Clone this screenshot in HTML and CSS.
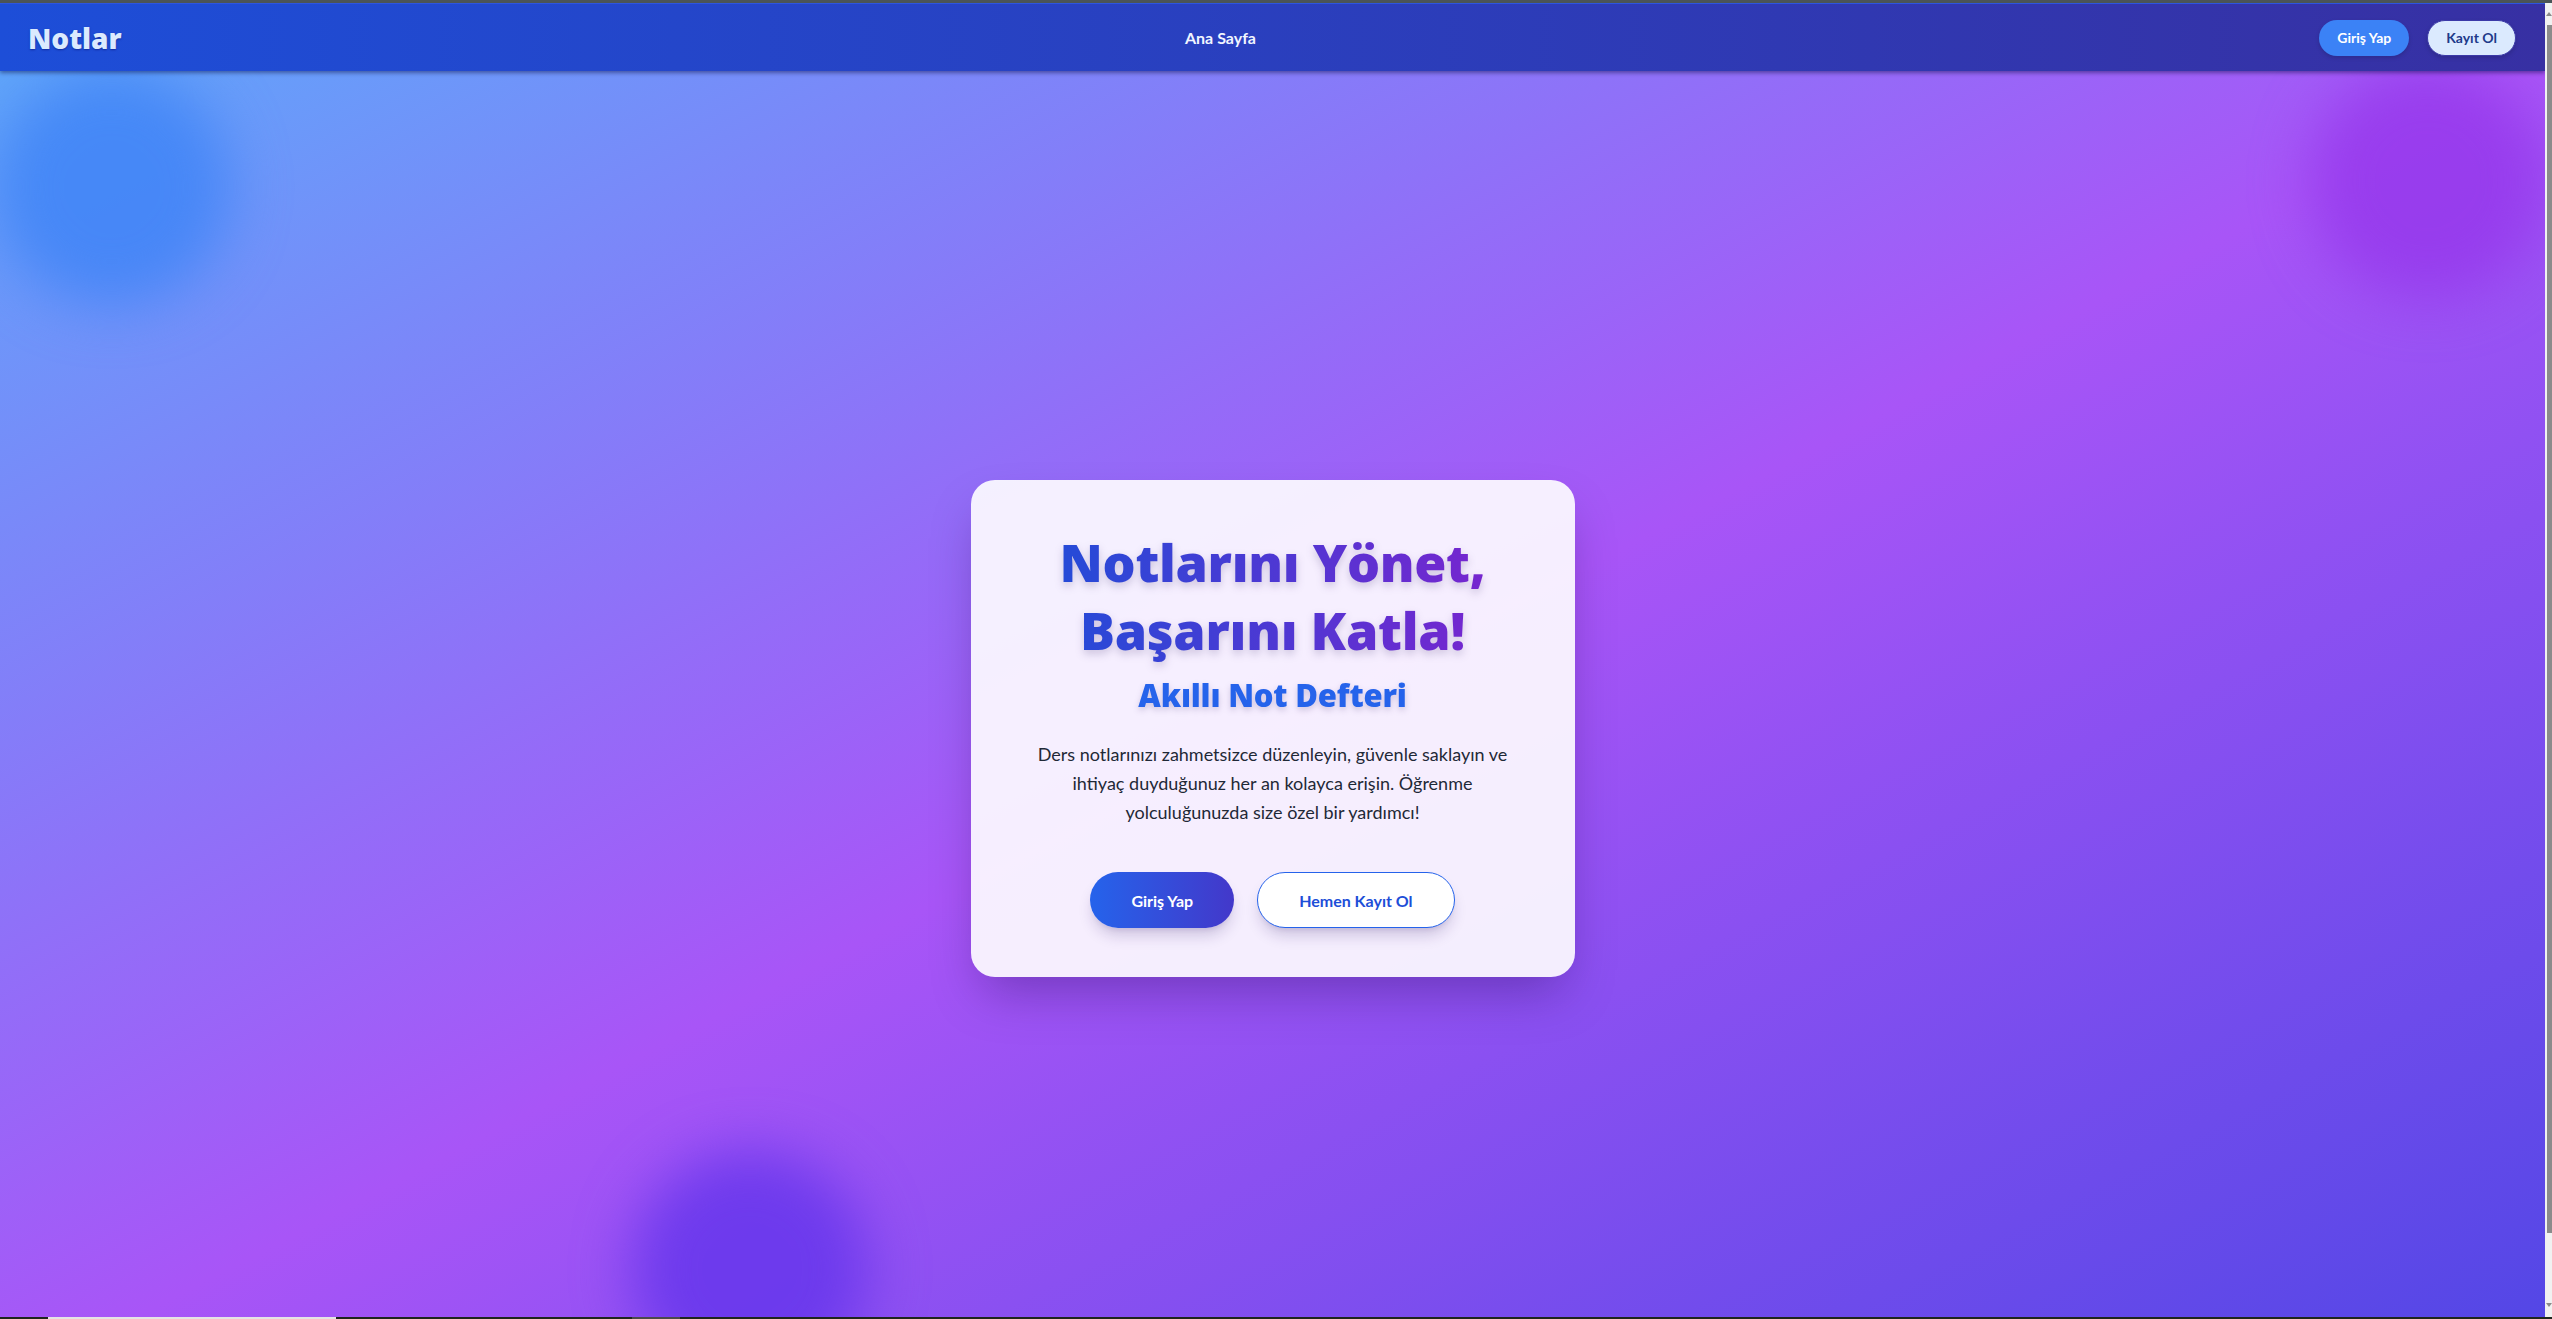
FILE: index.html
```html
<!DOCTYPE html>
<html lang="tr">
<head>
<meta charset="utf-8">
<title>Notlar</title>
<link rel="stylesheet" href="styles.css">
</head>
<body>
  <div class="frame-top"></div>
  <div class="viewport">
    <div class="page">
      <header class="nav">
        <a class="logo" href="#">Notlar</a>
        <nav class="nav-links"><a href="#">Ana Sayfa</a></nav>
        <div class="nav-actions">
          <a class="nav-btn nav-btn-login" href="#">Giriş Yap</a>
          <a class="nav-btn nav-btn-register" href="#">Kayıt Ol</a>
        </div>
      </header>
      <main class="hero">
        <span class="blob blob-blue"></span>
        <span class="blob blob-purple"></span>
        <span class="blob blob-violet"></span>
        <section class="card">
          <h1 class="card-title">Notlarını Yönet,<br>Başarını Katla!</h1>
          <h2 class="card-subtitle">Akıllı Not Defteri</h2>
          <p class="card-text">Ders notlarınızı zahmetsizce düzenleyin, güvenle saklayın ve ihtiyaç duyduğunuz her an kolayca erişin. Öğrenme yolculuğunuzda size özel bir yardımcı!</p>
          <div class="card-actions">
            <a class="btn btn-primary" href="#">Giriş Yap</a>
            <a class="btn btn-outline" href="#">Hemen Kayıt Ol</a>
          </div>
        </section>
      </main>
    </div>
    <div class="scrollbar">
      <span class="sb-arrow sb-up"></span>
      <span class="sb-thumb"></span>
      <span class="sb-arrow sb-down"></span>
    </div>
  </div>
  <div class="frame-bottom">
    <span class="fb-seg fb-light"></span>
    <span class="fb-seg fb-gray"></span>
  </div>
</body>
</html>
```

FILE: styles.css
```css
* { box-sizing: border-box; }
html, body { margin: 0; padding: 0; }
body {
  width: 2552px;
  height: 1319px;
  overflow: hidden;
  display: flex;
  flex-direction: column;
  font-family: "Lato", "Open Sans", sans-serif;
  background: #1f2620;
}
a { text-decoration: none; }

.frame-top { height: 3px; flex: none; background: #4b5457; }
.frame-bottom {
  height: 2px; flex: none; background: #1d261d;
  display: flex; padding-left: 48px;
}
.fb-seg { display: block; height: 2px; }
.fb-light { width: 288px; background: #e4e4e4; }
.fb-gray { width: 48px; margin-left: 296px; background: #4a4a4a; }

.viewport { flex: 1; display: flex; min-height: 0; }
.page { flex: 1; display: flex; flex-direction: column; overflow: hidden; background: #4f46e5; }

.scrollbar {
  width: 7px; flex: none; background: #f1f1f1;
  display: flex; flex-direction: column; align-items: flex-end;
  padding: 9px 0 10px;
}
.sb-arrow { width: 0; height: 0; border-left: 3px solid transparent; border-right: 3px solid transparent; }
.sb-up { border-bottom: 4px solid #8a8a8a; }
.sb-down { border-top: 4px solid #8a8a8a; margin-top: auto; }
.sb-thumb { width: 5px; height: 1208px; margin-top: 9px; background: #8b8b8b; }

/* header */
.nav {
  flex: none;
  height: 68px;
  display: flex;
  align-items: center;
  justify-content: space-between;
  padding: 0 29px 0 28px;
  background: linear-gradient(to right, #1d4ed8, #3730a3);
  border-top: 1px solid #2d55e0;
  box-shadow: 0 2px 4px rgba(10, 10, 60, 0.45);
  position: relative;
  z-index: 2;
}
.logo {
  font-family: "Open Sans", "Lato", sans-serif;
  font-size: 28px;
  font-weight: 800;
  color: #dbeafe;
  text-shadow: 0 1px 2px rgba(10, 20, 120, 0.6);
}
.nav-links a {
  color: #f1f5ff;
  font-size: 16px;
  font-weight: 700;
}
.nav-actions { display: flex; gap: 18px; }
.nav-btn {
  height: 36px;
  display: flex;
  align-items: center;
  padding: 0 18px;
  border-radius: 999px;
  font-size: 14px;
  font-weight: 700;
  box-shadow: 0 2px 4px rgba(0, 0, 0, 0.15);
}
.nav-btn-login { background: #3b82f6; color: #ffffff; }
.nav-btn-register { background: #dbeafe; color: #1e3a8a; border: 1px solid #3b3aa8; }

/* hero */
.hero {
  flex: none;
  height: 1315px;
  position: relative;
  display: flex;
  align-items: center;
  justify-content: center;
  background: linear-gradient(to bottom right, #60a5fa 0%, #a855f7 50%, #4f46e5 100%);
  overflow: hidden;
}
.blob {
  position: absolute;
  width: 236px;
  height: 236px;
  border-radius: 50%;
  filter: blur(28px);
}
.blob-blue { left: -6px; top: -2px; background: rgba(59, 130, 246, 0.75); }
.blob-purple { left: 2310px; top: -8px; background: rgba(147, 51, 234, 0.7); }
.blob-violet { left: 632px; top: 1080px; background: rgba(99, 52, 235, 0.8); }

.card {
  position: relative;
  width: 604px;
  padding: 48px 48px 49px;
  border-radius: 24px;
  background: rgba(255, 255, 255, 0.9);
  box-shadow: 0 25px 50px -12px rgba(30, 10, 80, 0.35);
  text-align: center;
}
.card-title {
  margin: 0 0 13px;
  font-family: "Open Sans", "Lato", sans-serif;
  font-size: 52px;
  line-height: 68px;
  font-weight: 800;
  letter-spacing: -0.3px;
  background: linear-gradient(to right, #1d4ed8, #7e22ce);
  -webkit-background-clip: text;
  background-clip: text;
  color: transparent;
  filter: drop-shadow(0 4px 4px rgba(40, 20, 90, 0.2));
}
.card-subtitle {
  margin: 0 0 27px;
  font-family: "Open Sans", "Lato", sans-serif;
  font-size: 31px;
  line-height: 36px;
  font-weight: 800;
  letter-spacing: -0.2px;
  color: #2563eb;
  filter: drop-shadow(0 3px 3px rgba(40, 20, 90, 0.2));
}
.card-text {
  margin: 0 auto 45px;
  font-size: 18px;
  line-height: 29.25px;
  color: #1f2937;
}
.card-actions { display: flex; justify-content: center; gap: 23px; }
.btn {
  height: 56px;
  display: flex;
  align-items: center;
  padding: 0 41px;
  border-radius: 999px;
  font-size: 16px;
  font-weight: 700;
  box-shadow: 0 10px 15px -3px rgba(40, 20, 100, 0.2), 0 4px 6px -4px rgba(40, 20, 100, 0.15);
}
.btn-primary { background: linear-gradient(to right, #2563eb, #4338ca); color: #ffffff; }
.btn-outline { background: #ffffff; color: #1d4ed8; border: 1.5px solid #2563eb; }
```
